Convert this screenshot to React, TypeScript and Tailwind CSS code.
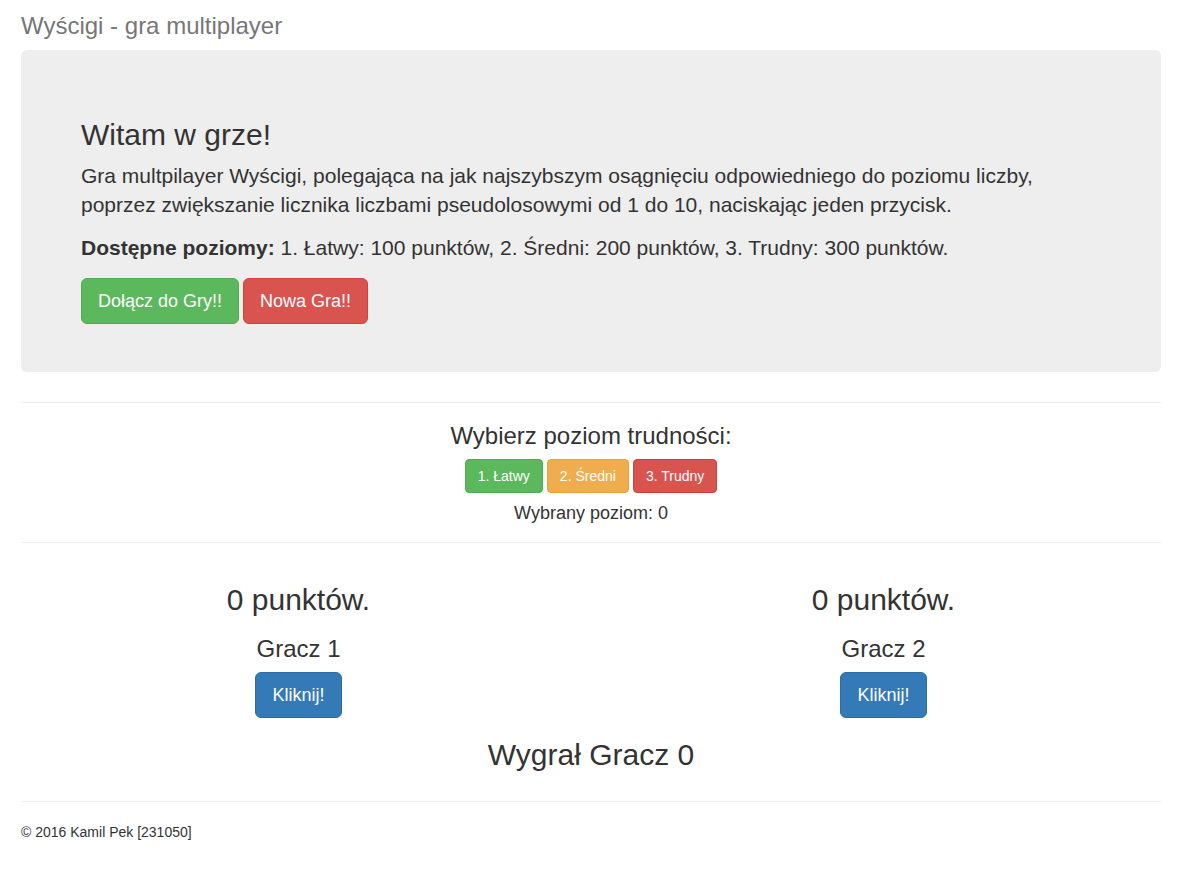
import React, { useState } from 'react';

const LEVELS = [
  { id: 1, label: '1. Łatwy', cls: 'bg-[#5cb85c] border-[#4cae4c]' },
  { id: 2, label: '2. Średni', cls: 'bg-[#f0ad4e] border-[#eea236]' },
  { id: 3, label: '3. Trudny', cls: 'bg-[#d9534f] border-[#d43f3a]' },
];

const PlayerColumn: React.FC<{ name: string; points: number; onClick: () => void }> = ({ name, points, onClick }) => (
  <div className="w-1/2 px-[15px] text-center">
    <h2 className="text-[30px] leading-[33px] mt-[20px]">{points} punktów.</h2>
    <h3 className="text-[24px] leading-[26px] mt-[20px]">{name}</h3>
    <button
      onClick={onClick}
      className="mt-[10px] bg-[#337ab7] border border-[#2e6da4] text-white text-[18px] leading-[24px] px-[16px] py-[10px] rounded-[6px]"
    >
      Kliknij!
    </button>
  </div>
);

export default function App() {
  const [level, setLevel] = useState(0);

  return (
    <div className="min-h-screen bg-white text-[#333] text-[14px] leading-[20px] font-['Liberation_Sans',Arial,sans-serif]">
      <div className="w-[1140px] ml-[21px] pt-[13px] pb-[20px]">
        <h3 className="text-[24px] leading-[26px] text-[#777]">Wyścigi - gra multiplayer</h3>

        {/* JUMBOTRON */}
        <div className="mt-[11px] bg-[#eee] rounded-[6px] px-[60px] pt-[48px] pb-[48px]">
          <h2 className="text-[30px] leading-[33px] mt-[20px]">Witam w grze!</h2>
          <p className="text-[21px] leading-[29px] mt-[10px]">
            Gra multpilayer Wyścigi, polegająca na jak najszybszym osągnięciu odpowiedniego do poziomu liczby,
            poprzez zwiększanie licznika liczbami pseudolosowymi od 1 do 10, naciskając jeden przycisk.
          </p>
          <p className="text-[21px] leading-[29px] mt-[14px]">
            <b>Dostępne poziomy:</b> 1. Łatwy: 100 punktów, 2. Średni: 200 punktów, 3. Trudny: 300 punktów.
          </p>
          <div className="flex gap-1 mt-[16px]">
            <button className="bg-[#5cb85c] border border-[#4cae4c] text-white text-[18px] leading-[24px] px-[16px] py-[10px] rounded-[6px]">
              Dołącz do Gry!!
            </button>
            <button className="bg-[#d9534f] border border-[#d43f3a] text-white text-[18px] leading-[24px] px-[16px] py-[10px] rounded-[6px]">
              Nowa Gra!!
            </button>
          </div>
        </div>

        <hr className="mt-[30px] border-t border-[#eee]" />

        {/* LEVEL PICKER */}
        <div className="text-center">
          <h3 className="text-[24px] leading-[26px] mt-[20px]">Wybierz poziom trudności:</h3>
          <div className="flex justify-center gap-1 mt-[10px]">
            {LEVELS.map((l) => (
              <button
                key={l.id}
                onClick={() => setLevel(l.id)}
                className={`${l.cls} border text-white text-[14px] leading-[20px] px-[12px] py-[6px] rounded-[4px]`}
              >
                {l.label}
              </button>
            ))}
          </div>
          <h4 className="text-[18px] leading-[20px] mt-[10px]">Wybrany poziom: {level}</h4>
        </div>

        <hr className="mt-[19px] border-t border-[#eee]" />

        {/* PLAYERS */}
        <div className="flex -mx-[15px] mt-[20px]">
          <PlayerColumn name="Gracz 1" points={0} onClick={() => {}} />
          <PlayerColumn name="Gracz 2" points={0} onClick={() => {}} />
        </div>
        <h2 className="text-[30px] leading-[33px] mt-[20px] text-center">Wygrał Gracz 0</h2>

        <hr className="mt-[30px] border-t border-[#eee]" />

        <footer className="mt-[20px]">© 2016 Kamil Pek [231050]</footer>
      </div>
    </div>
  );
}
